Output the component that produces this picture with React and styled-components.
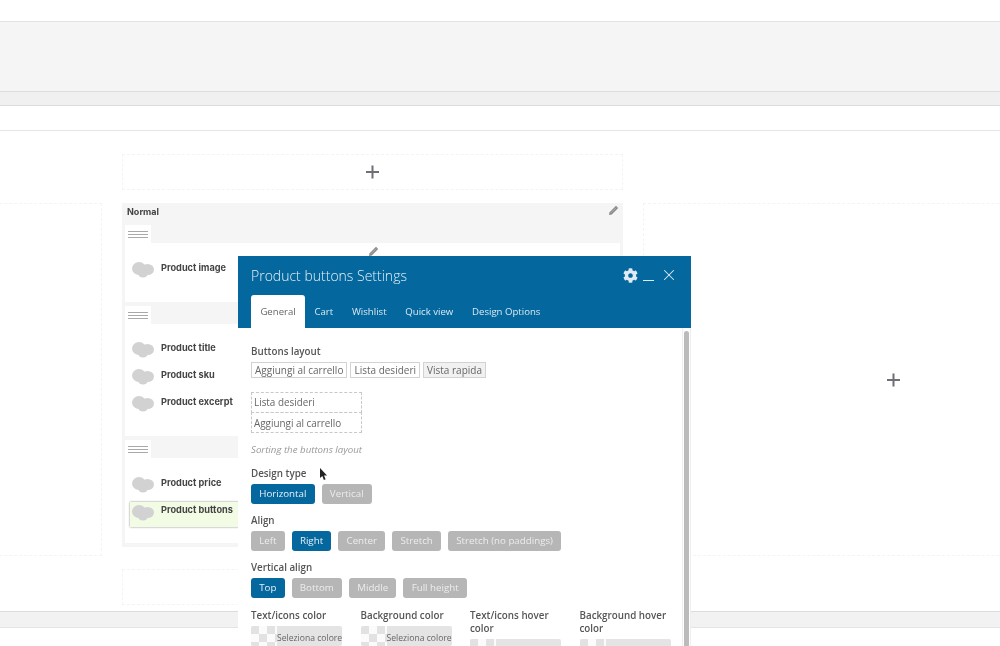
import React from "react";
import styled, { createGlobalStyle } from "styled-components";
import { X } from "lucide-react";
import { FaCog } from "react-icons/fa";

const GlobalStyle = createGlobalStyle`
  html, body {
    margin: 0;
    padding: 0;
    background: #fff;
  }
  #root {
    filter: blur(0.35px);
  }
`;

const Page = styled.div`
  position: relative;
  width: 1000px;
  height: 646px;
  overflow: hidden;
  background: #fff;
  font-family: "Open Sans", sans-serif;
`;

const TopSpace = styled.div`
  height: 21px;
`;

const AdminBar = styled.div`
  height: 69px;
  background: #f5f5f5;
  border-top: 1px solid #e4e4e6;
`;

const SubBar = styled.div`
  height: 13px;
  background: #f0f0f0;
  border-top: 1px solid #dcdcdc;
  border-bottom: 1px solid #dcdcdc;
`;

const TitleRow = styled.div`
  height: 24px;
  border-bottom: 1px solid #e6e6e6;
`;

const Columns = styled.div`
  display: flex;
  gap: 20px;
  margin-left: -399px;
  padding-top: 23px;
`;

const Column = styled.div`
  width: 501px;
  flex: none;
  display: flex;
  flex-direction: column;
`;

const SideColumn = styled(Column)`
  padding-top: 49px;
`;

const AddBox = styled.div`
  height: ${(p) => p.$h}px;
  box-sizing: border-box;
  border: 1px dashed #f4f4f4;
  display: flex;
  align-items: center;
  justify-content: center;
`;

const Panel = styled.div`
  margin-top: 13px;
  height: 344px;
  box-sizing: border-box;
  background: #f5f5f5;
  padding: 0 3px 4px;
  display: flex;
  flex-direction: column;
  gap: 4px;
`;

const PanelHead = styled.div`
  height: 22px;
  margin-bottom: -4px;
  display: flex;
  align-items: center;
  justify-content: space-between;
  padding: 0 1px 5px 2px;
  box-sizing: border-box;
  font-family: Inter, sans-serif;
  font-size: 9px;
  font-weight: 700;
  color: #444;
`;

const HeadPencil = styled.div`
  display: flex;
  margin-top: -2px;
`;

const Strip = styled.div`
  height: 18px;
`;

const HandleTab = styled.div`
  width: 26px;
  height: 18px;
  background: #fff;
  display: flex;
  flex-direction: column;
  justify-content: center;
  gap: 2px;
  padding: 0 3px;
  box-sizing: border-box;
`;

const HandleLine = styled.span`
  display: block;
  height: 1px;
  background: #a9a9a9;
`;

const Section = styled.div`
  position: relative;
  background: #fff;
  height: ${(p) => p.$h}px;
  box-sizing: border-box;
  padding: ${(p) => p.$pad}px 5px 0;
`;

const SectionPencil = styled.div`
  position: absolute;
  display: flex;
  top: 3px;
  left: 243px;
`;

const Element = styled.div`
  height: 27px;
  box-sizing: border-box;
  display: flex;
  gap: 7px;
  padding: 6px 2px 0;
  font-family: Inter, sans-serif;
  font-size: 9.2px;
  font-weight: 700;
  color: #444;
  line-height: 15px;
  ${(p) =>
    p.$active &&
    `
    background: #f2fbe3;
    height: 25px;
    margin-top: 6px;
    padding-top: 1px;
    line-height: 13px;
    box-shadow: 0 0 2px #888;
  `}
`;

const CloudIcon = styled.svg`
  flex: none;
  margin-top: 1px;
`;

const BottomBox = styled(AddBox)`
  margin-top: 22px;
`;

const FooterBar = styled.div`
  position: absolute;
  left: 0;
  right: 0;
  top: 611px;
  height: 15px;
  background: #f2f2f2;
  border-top: 1px solid #dcdcdc;
  border-bottom: 1px solid #e4e4e4;
`;

const Modal = styled.div`
  position: absolute;
  left: 238px;
  top: 256px;
  width: 453px;
  height: 400px;
  background: #fff;
  color: #555;
`;

const ModalHeader = styled.div`
  height: 72px;
  box-sizing: border-box;
  background: #04689f;
  padding-left: 13px;
  display: flex;
  flex-direction: column;
  justify-content: space-between;
`;

const TitleLine = styled.div`
  display: flex;
  align-items: center;
  justify-content: space-between;
  height: 38px;
  padding-right: 13px;
`;

const ModalTitle = styled.div`
  font-size: 14px;
  font-weight: 300;
  color: #e6eff5;
`;

const HeaderIcons = styled.div`
  display: flex;
  align-items: center;
  color: #dfeaf2;
`;

const MinimizeLine = styled.span`
  width: 11px;
  height: 1.5px;
  background: #dfeaf2;
  margin: 11px 6px 0 5px;
`;

const Tabs = styled.div`
  display: flex;
  align-items: stretch;
  height: 33px;
`;

const Tab = styled.div`
  padding: 0 9.4px;
  display: flex;
  align-items: center;
  font-size: 9.6px;
  color: ${(p) => (p.$active ? "#666" : "#dbe8f1")};
  background: ${(p) => (p.$active ? "#fff" : "transparent")};
  border-radius: ${(p) => (p.$active ? "3px 3px 0 0" : "0")};
`;

const ModalBody = styled.div`
  position: relative;
  padding: 17px 0 0 13px;
`;

const Scrollbar = styled.div`
  position: absolute;
  right: 0;
  top: 0;
  bottom: 0;
  width: 9px;
  border-left: 1px solid #eee;
  border-right: 1px solid #eee;
  box-sizing: border-box;
  padding: 3px 1px 0;
`;

const ScrollThumb = styled.div`
  height: 100%;
  background: #bbb;
  border-radius: 3px;
`;

const Label = styled.div`
  font-size: 9.8px;
  font-weight: 600;
  line-height: 13px;
  color: #555;
  margin-bottom: 4px;
`;

const ChipRow = styled.div`
  display: flex;
  gap: 3px;
`;

const Chip = styled.div`
  height: 16px;
  box-sizing: border-box;
  border: 1px solid #d2d2d2;
  padding: 0 3px;
  font-size: 10px;
  line-height: 14px;
  color: #666;
  background: ${(p) => (p.$off ? "#f1f1f1" : "#fff")};
`;

const SortBox = styled.div`
  width: 111px;
  margin-top: 14px;
  box-sizing: border-box;
`;

const SortItem = styled.div`
  height: 21px;
  box-sizing: border-box;
  border: 1px dashed #c8c8c8;
  margin-top: ${(p) => (p.$next ? -1 : 0)}px;
  padding-left: 2px;
  font-size: 9.9px;
  line-height: ${(p) => (p.$next ? 20 : 19)}px;
  color: #666;
`;

const Hint = styled.div`
  margin-top: 10px;
  font-size: 9.7px;
  font-style: italic;
  line-height: 13px;
  color: #999;
`;

const Group = styled.div`
  margin-top: ${(p) => p.$top}px;
`;

const ButtonRow = styled.div`
  display: flex;
  gap: 7px;
`;

const OptionButton = styled.div`
  height: 20px;
  box-sizing: border-box;
  padding: 0 8.2px;
  border-radius: 3px;
  font-size: 9.75px;
  line-height: 20px;
  background: ${(p) => (p.$active ? "#04689f" : "#b6b6b6")};
  color: ${(p) => (p.$active ? "#e8f0f6" : "#ececec")};
`;

const ColorGrid = styled.div`
  display: grid;
  grid-template-columns: repeat(4, 91px);
  column-gap: 18.5px;
  margin-top: 11px;
`;

const ColorPicker = styled.div`
  height: 20px;
  width: 91px;
  background: #e4e4e4;
  border-radius: 2px;
  display: flex;
  overflow: hidden;
`;

const Checker = styled.div`
  flex: none;
  width: 26px;
  height: 100%;
  background-color: #fff;
  background-image: conic-gradient(#fbfbfb 25%, #e2e2e2 0 50%, #fbfbfb 0 75%, #e2e2e2 0);
  background-size: 16px 16px;
`;

const PickerText = styled.div`
  font-size: 8.6px;
  line-height: 24px;
  color: #666;
  white-space: nowrap;
`;

const Cursor = styled.svg`
  position: absolute;
  left: 319px;
  top: 468px;
`;

const PlusIcon = () => (
  <svg width="16" height="16" viewBox="0 0 16 16">
    <path d="M7.5 1.5v13M1 8h13" stroke="#6f6f76" strokeWidth="2" fill="none" />
  </svg>
);

const Pencil = () => (
  <svg width="11" height="11" viewBox="0 0 11 11">
    <path d="M8 .8l2.2 2.2-6.4 6.4L1 10l.6-2.8z" fill="#8a8a8a" />
    <path d="M2.6 8.2L8.4 2.4" stroke="#c4c4c4" strokeWidth="0.6" fill="none" />
  </svg>
);

const Cloud = () => (
  <CloudIcon width="22" height="17" viewBox="0 0 22 17">
    <g fill="#d2d2d2">
      <ellipse cx="7" cy="7.5" rx="7" ry="6.5" />
      <ellipse cx="15.5" cy="8.5" rx="6.5" ry="5.5" />
      <ellipse cx="11" cy="12.5" rx="5" ry="4" />
    </g>
  </CloudIcon>
);

const Handle = () => (
  <Strip>
    <HandleTab>
      <HandleLine />
      <HandleLine />
      <HandleLine />
    </HandleTab>
  </Strip>
);

const Product = ({ name, active }) => (
  <Element $active={active}>
    <Cloud />
    {name}
  </Element>
);

const Options = ({ items, active }) => (
  <ButtonRow>
    {items.map((item) => (
      <OptionButton key={item} $active={item === active}>
        {item}
      </OptionButton>
    ))}
  </ButtonRow>
);

const colorFields = [
  "Text/icons color",
  "Background color",
  "Text/icons hover color",
  "Background hover color",
];

function App() {
  return (
    <Page>
      <GlobalStyle />
      <TopSpace />
      <AdminBar />
      <SubBar />
      <TitleRow />
      <Columns>
        <SideColumn>
          <AddBox $h={353} />
        </SideColumn>
        <Column>
          <AddBox $h={36}>
            <PlusIcon />
          </AddBox>
          <Panel>
            <PanelHead>
              Normal
              <HeadPencil>
                <Pencil />
              </HeadPencil>
            </PanelHead>
            <div>
              <Handle />
              <Section $h={59} $pad={11}>
                <SectionPencil>
                  <Pencil />
                </SectionPencil>
                <Product name="Product image" />
              </Section>
            </div>
            <div>
              <Handle />
              <Section $h={112} $pad={10}>
                <Product name="Product title" />
                <Product name="Product sku" />
                <Product name="Product excerpt" />
              </Section>
            </div>
            <div>
              <Handle />
              <Section $h={85} $pad={11}>
                <Product name="Product price" />
                <Product name="Product buttons" active />
              </Section>
            </div>
          </Panel>
          <BottomBox $h={36} />
        </Column>
        <SideColumn>
          <AddBox $h={353}>
            <PlusIcon />
          </AddBox>
        </SideColumn>
      </Columns>
      <FooterBar />
      <Modal>
        <ModalHeader>
          <TitleLine>
            <ModalTitle>Product buttons Settings</ModalTitle>
            <HeaderIcons>
              <FaCog size={15} />
              <MinimizeLine />
              <X size={18} strokeWidth={1.4} />
            </HeaderIcons>
          </TitleLine>
          <Tabs>
            <Tab $active>General</Tab>
            <Tab>Cart</Tab>
            <Tab>Wishlist</Tab>
            <Tab>Quick view</Tab>
            <Tab>Design Options</Tab>
          </Tabs>
        </ModalHeader>
        <ModalBody>
          <Scrollbar>
            <ScrollThumb />
          </Scrollbar>
          <Label>Buttons layout</Label>
          <ChipRow>
            <Chip>Aggiungi al carrello</Chip>
            <Chip>Lista desideri</Chip>
            <Chip $off>Vista rapida</Chip>
          </ChipRow>
          <SortBox>
            <SortItem>Lista desideri</SortItem>
            <SortItem $next>Aggiungi al carrello</SortItem>
          </SortBox>
          <Hint>Sorting the buttons layout</Hint>
          <Group $top={11}>
            <Label>Design type</Label>
            <Options items={["Horizontal", "Vertical"]} active="Horizontal" />
          </Group>
          <Group $top={10}>
            <Label>Align</Label>
            <Options
              items={["Left", "Right", "Center", "Stretch", "Stretch (no paddings)"]}
              active="Right"
            />
          </Group>
          <Group $top={10}>
            <Label>Vertical align</Label>
            <Options items={["Top", "Bottom", "Middle", "Full height"]} active="Top" />
          </Group>
          <ColorGrid>
            {colorFields.map((field) => (
              <div key={field}>
                <Label>{field}</Label>
                <ColorPicker>
                  <Checker />
                  <PickerText>Seleziona colore</PickerText>
                </ColorPicker>
              </div>
            ))}
          </ColorGrid>
        </ModalBody>
      </Modal>
      <Cursor width="9" height="13" viewBox="0 0 9 13">
        <path d="M1 0v10l2.3-2 1.6 4 1.7-.7-1.6-3.8H8z" fill="#222" />
      </Cursor>
    </Page>
  );
}

export default App;
